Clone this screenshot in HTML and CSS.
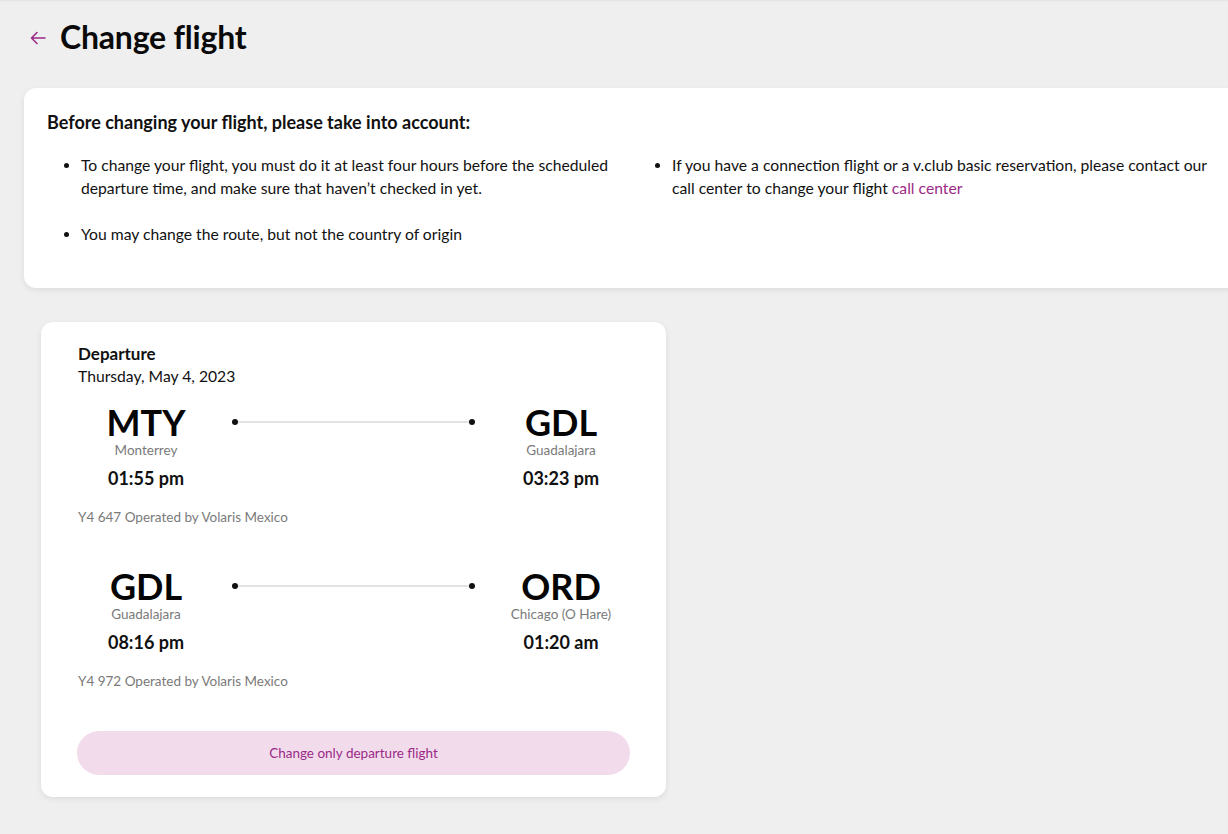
FILE: index.html
```html
<!doctype html>
<html lang="en">

<head>
  <meta charset="utf-8">
  <title>Change flight</title>
  <link rel="stylesheet" href="styles.css">
</head>

<body>
  <header class="page-head">
    <a class="back" href="#" aria-label="Back">
      <svg width="20" height="20" viewBox="0 0 20 20" fill="none" stroke="currentColor" stroke-width="1.6" stroke-linecap="round" stroke-linejoin="round">
        <path d="M17 10H3.5M9 4.5L3.5 10L9 15.5"/>
      </svg>
    </a>
    <h1>Change flight</h1>
  </header>

  <section class="notice">
    <h2>Before changing your flight, please take into account:</h2>
    <div class="notice-cols">
      <ul>
        <li>To change your flight, you must do it at least four hours before the scheduled departure time, and make sure that haven’t checked in yet.</li>
        <li>You may change the route, but not the country of origin</li>
      </ul>
      <ul>
        <li>If you have a connection flight or a v.club basic reservation, please contact our call center to change your flight <a href="#">call center</a></li>
      </ul>
    </div>
  </section>

  <section class="trip">
    <h3>Departure</h3>
    <p class="date">Thursday, May 4, 2023</p>

    <div class="segment">
      <div class="route">
        <div class="port">
          <span class="code">MTY</span>
          <span class="city">Monterrey</span>
          <span class="time">01:55 pm</span>
        </div>
        <div class="path"><i></i></div>
        <div class="port">
          <span class="code">GDL</span>
          <span class="city">Guadalajara</span>
          <span class="time">03:23 pm</span>
        </div>
      </div>
      <p class="operated">Y4 647 Operated by Volaris Mexico</p>
    </div>

    <div class="segment">
      <div class="route">
        <div class="port">
          <span class="code">GDL</span>
          <span class="city">Guadalajara</span>
          <span class="time">08:16 pm</span>
        </div>
        <div class="path"><i></i></div>
        <div class="port">
          <span class="code">ORD</span>
          <span class="city">Chicago (O Hare)</span>
          <span class="time">01:20 am</span>
        </div>
      </div>
      <p class="operated">Y4 972 Operated by Volaris Mexico</p>
    </div>

    <button class="change-btn" type="button">Change only departure flight</button>
  </section>
</body>

</html>
```

FILE: styles.css
```css
html { background-color:#efefef; }
body { margin:0; min-height:834px; font-family:Lato,"Open Sans",sans-serif; color:#111; overflow-x:hidden; box-shadow:inset 0 2px 2px -1px #e2e2e2; }

.page-head { display:flex; align-items:center; gap:12px; padding:15px 28px 0; height:42px; }
.back { color:#9b2a87; display:flex; margin-top:3px; }
h1 { margin:0; font-size:32px; font-weight:700; color:#0a0a0a; letter-spacing:-0.2px; }

.notice { margin:31px 0 0 24px; width:1182px; padding:23px 23px 19px; background:#fff; border-radius:12px; box-shadow:0 2px 6px rgba(0,0,0,.08); }
.notice h2 { margin:0 0 21px; font-size:18px; font-weight:700; line-height:22px; }
.notice-cols { display:grid; grid-template-columns:591px 591px; }
.notice ul { margin:0; padding-left:34px; }
.notice li { font-size:15.7px; line-height:23px; margin-bottom:23px; }
.notice a { color:#9b2a87; text-decoration:none; }

.trip { margin:34px 0 0 41px; width:551px; padding:22px 37px 22px; background:#fff; border-radius:12px; box-shadow:0 2px 6px rgba(0,0,0,.08); }
.trip h3 { margin:0; font-size:17px; line-height:20px; font-weight:700; }
.trip .date { margin:2px 0 0; font-size:15.7px; line-height:20px; }

.segment { margin-top:16px; }
.segment + .segment { margin-top:40px; }
.route { display:flex; align-items:flex-start; }
.port { width:136px; display:flex; flex-direction:column; align-items:center; }
.code { font-size:36px; line-height:40px; font-weight:700; color:#050505; }
.city { margin-top:-1px; font-size:13.5px; line-height:18px; color:#7a7a7a; }
.time { margin-top:8px; font-size:18px; line-height:22px; font-weight:700; }
.path { flex:1; margin:19px 21px 0; display:flex; align-items:center; }
.path i { flex:1; height:2px; background:#e3e3e3; position:relative; }
.path i:before, .path i:after { content:""; position:absolute; top:-2px; width:6px; height:6px; border-radius:50%; background:#111; }
.path i:before { left:-3px; }
.path i:after { right:-3px; }
.operated { margin:19px 0 0; font-size:13.5px; line-height:18px; color:#7a7a7a; }

.change-btn { display:block; width:553px; height:44px; margin:41px 0 0 -1px; border:0; border-radius:22px; background:#f2dcec; color:#9b2a87; font-family:inherit; font-size:13.5px; cursor:pointer; }
```
